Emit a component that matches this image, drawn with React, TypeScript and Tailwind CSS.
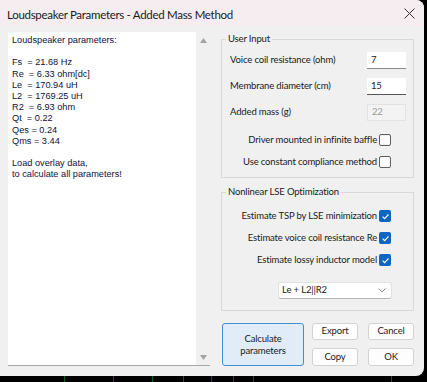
import React from "react";

const Check = ({ checked }: { checked?: boolean }) =>
  checked ? (
    <div className="w-[12px] h-[12px] rounded-[2px] bg-[#0b65c2] flex items-center justify-center shrink-0">
      <svg width="9" height="9" viewBox="0 0 10 10">
        <path d="M1.8 5.2 L4 7.3 L8.3 2.8" fill="none" stroke="white" strokeWidth="1.3" />
      </svg>
    </div>
  ) : (
    <div className="w-[12px] h-[12px] rounded-[2px] border border-[#5f5f5f] bg-[#fbfbfb] shrink-0" />
  );

const CheckRow = ({ label, checked, mt }: { label: string; checked?: boolean; mt: string }) => (
  <div className={`flex items-center justify-end h-[14px] gap-[2px] pr-[22px] ${mt}`}>
    <span className="text-[#1a1a1a] whitespace-nowrap">{label}</span>
    <Check checked={checked} />
  </div>
);

const Btn = ({ children, cls }: { children: React.ReactNode; cls: string }) => (
  <div className={`flex items-center justify-center rounded-[3px] border border-[#d3d3d3] bg-[#fdfdfd] text-[#1a1a1a] ${cls}`}>
    {children}
  </div>
);

export default function App() {
  const lines = [
    "Loudspeaker parameters:",
    "\u00a0",
    "Fs  = 21.68 Hz",
    "Re  = 6.33 ohm[dc]",
    "Le  = 170.94 uH",
    "L2  = 1769.25 uH",
    "R2  = 6.93 ohm",
    "Qt  = 0.22",
    "Qes = 0.24",
    "Qms = 3.44",
    "\u00a0",
    "Load overlay data,",
    "to calculate all parameters!",
  ];
  return (
    <div
      className="w-[427px] h-[382px] bg-black relative overflow-hidden text-[9.5px] tracking-[-0.15px]"
      style={{ fontFamily: "Lato, 'Noto Sans', sans-serif" }}
    >
      <div className="absolute left-[64px] bottom-0 w-px h-[6px] bg-[#0a5a1a]" />
      <div className="absolute left-[113px] bottom-0 w-px h-[6px] bg-[#0a5a1a]" />
      <div className="absolute left-[152px] bottom-0 w-px h-[6px] bg-[#0a5a1a]" />
      <div className="absolute left-[183px] bottom-0 w-px h-[6px] bg-[#0a5a1a]" />
      <div className="absolute left-[211px] bottom-0 w-px h-[6px] bg-[#0a5a1a]" />
      <div className="absolute left-[233px] bottom-0 w-px h-[6px] bg-[#0a5a1a]" />
      <div className="absolute left-[253px] bottom-0 w-px h-[6px] bg-[#0a5a1a]" />
      <div className="absolute left-[391px] bottom-0 w-px h-[6px] bg-[#0a5a1a]" />

      <div className="w-[424px] h-[376px] bg-[#f0f0f0] rounded-tr-[8px] rounded-br-[8px] overflow-hidden flex flex-col">
        {/* title bar */}
        <div className="h-[26px] bg-[#f6edf1] flex items-center justify-between pl-[7px] pr-[9px] shrink-0">
          <span className="text-[11.5px] tracking-[-0.3px] text-[#1a1a1a] pt-[3px] whitespace-nowrap">
            Loudspeaker Parameters - Added Mass Method
          </span>
          <svg width="11" height="11" viewBox="0 0 11 11" className="mt-[1px]">
            <path d="M0.5 0.5 L10.5 10.5 M10.5 0.5 L0.5 10.5" stroke="#333" strokeWidth="1" />
          </svg>
        </div>

        <div className="flex flex-1 pt-[6px] pl-[8px]">
          {/* left text box */}
          <div className="w-[202px] h-[334px] bg-white border-b border-[#a8a8a8] flex">
            <div
              className="flex-1 pl-[4px] pt-[3px] text-[#10103a] leading-[11.2px] text-[9.2px] tracking-normal whitespace-pre"
              style={{ fontFamily: "'Liberation Sans', Arial, sans-serif" }}
            >
              {lines.map((l, i) => (
                <div key={i}>{l}</div>
              ))}
            </div>
            <div className="w-[14px] bg-[#f0f0f0] flex flex-col items-center justify-between pt-[6px] pb-[5px]">
              <svg width="7" height="5" viewBox="0 0 7 5">
                <path d="M0 5 L3.5 0 L7 5 Z" fill="#a3a3a3" />
              </svg>
              <svg width="7" height="5" viewBox="0 0 7 5">
                <path d="M0 0 L3.5 5 L7 0 Z" fill="#a3a3a3" />
              </svg>
            </div>
          </div>

          {/* right column */}
          <div className="ml-[11px] w-[193px] flex flex-col">
            <fieldset className="border border-[#d9d9d9] px-0 pb-[8px] pt-0 mt-0">
              <legend className="ml-[4px] px-[2px] leading-[14px] text-[#1a1a1a]">User Input</legend>
              <div className="flex items-center h-[17px] mt-[6px] pl-[8px] pr-[7px]">
                <span className="flex-1 text-[#1a1a1a] whitespace-nowrap">Voice coil resistance (ohm)</span>
                <div className="w-[39px] h-[17px] bg-white border-b border-[#8a8a8a] pl-[4px] flex items-center text-[#1a1a1a]">7</div>
              </div>
              <div className="flex items-center h-[17px] mt-[9px] pl-[8px] pr-[7px]">
                <span className="flex-1 text-[#1a1a1a] whitespace-nowrap">Membrane diameter (cm)</span>
                <div className="w-[39px] h-[17px] bg-white border-b border-[#555] pl-[4px] flex items-center text-[#1a1a1a]">15</div>
              </div>
              <div className="flex items-center h-[17px] mt-[9px] pl-[8px] pr-[7px]">
                <span className="flex-1 text-[#1a1a1a] whitespace-nowrap">Added mass (g)</span>
                <div className="w-[39px] h-[17px] bg-[#f3f3f3] border border-[#e3e3e3] pl-[4px] flex items-center text-[#9a9a9a]">22</div>
              </div>
              <CheckRow label="Driver mounted in infinite baffle" mt="mt-[12px]" />
              <CheckRow label="Use constant compliance method" mt="mt-[8px]" />
            </fieldset>

            <fieldset className="border border-[#d9d9d9] px-0 pb-[11px] pt-0 mt-[7px]">
              <legend className="ml-[4px] px-[2px] leading-[14px] text-[#1a1a1a]">Nonlinear LSE Optimization</legend>
              <CheckRow label="Estimate TSP by LSE minimization" checked mt="mt-[10px]" />
              <CheckRow label="Estimate voice coil resistance Re" checked mt="mt-[8px]" />
              <CheckRow label="Estimate lossy inductor model" checked mt="mt-[8px]" />
              <div className="flex justify-end pr-[21px] mt-[15px]">
                <div className="w-[114px] h-[17px] bg-white rounded-[3px] border border-[#e1e1e1] border-b-[#b5b5b5] flex items-center justify-between pl-[3px] pr-[5px] text-[#1a1a1a]">
                  <span>Le + L2||R2</span>
                  <svg width="8" height="5" viewBox="0 0 8 5">
                    <path d="M0.5 0.5 L4 4 L7.5 0.5" fill="none" stroke="#777" strokeWidth="0.9" />
                  </svg>
                </div>
              </div>
            </fieldset>

            <div className="flex mt-[12px] pl-[1px]">
              <div className="w-[82px] h-[43px] rounded-[3px] border border-[#3f8fd8] bg-[#e0edf9] flex items-center justify-center text-center leading-[12px] text-[#1a1a1a]">
                Calculate
                <br />
                parameters
              </div>
              <div className="grid grid-cols-2 gap-x-[10px] gap-y-[8px] ml-[8px]">
                <Btn cls="w-[46px] h-[17px]">Export</Btn>
                <Btn cls="w-[46px] h-[17px]">Cancel</Btn>
                <Btn cls="w-[46px] h-[18px]">Copy</Btn>
                <Btn cls="w-[46px] h-[18px]">OK</Btn>
              </div>
            </div>
          </div>
        </div>
      </div>
    </div>
  );
}
